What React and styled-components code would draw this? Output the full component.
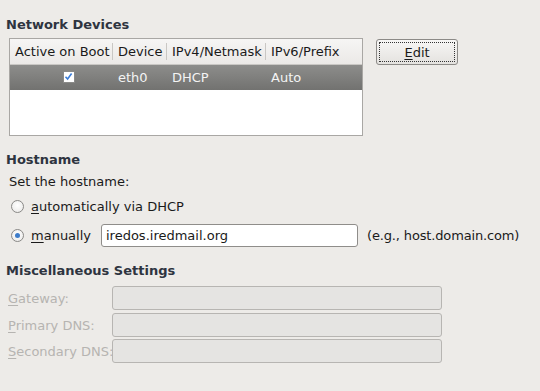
import React from "react";
import styled, { createGlobalStyle } from "styled-components";

const Global = createGlobalStyle`
  html, body { margin: 0; padding: 0; background: #edebe8; }
  body { font-family: "DejaVu Sans", sans-serif; font-size: 13px; color: #1a1a1a; }
`;

const Page = styled.div`
  width: 540px;
  height: 391px;
  box-sizing: border-box;
  padding: 17px 0 0 6px;
  background: #edebe8;
`;

const Heading = styled.div`
  font-weight: bold;
  font-size: 13px;
  color: #2e3440;
  line-height: 16px;
  margin-bottom: ${(p) => p.$mb || 0}px;
  margin-top: ${(p) => p.$mt || 0}px;
`;

const DevicesRow = styled.div`
  display: flex;
  align-items: flex-start;
  padding-left: 3px;
`;

const Table = styled.div`
  width: 352px;
  height: 96px;
  border: 1px solid #a9a7a4;
  background: #ffffff;
  box-sizing: content-box;
`;

const HeaderRow = styled.div`
  display: flex;
  height: 26px;
  background: linear-gradient(#f6f5f4, #ebe9e7);
  border-bottom: 1px solid #c9c7c4;
  box-sizing: border-box;
`;

const HeaderCell = styled.div`
  width: ${(p) => p.$w}px;
  box-sizing: border-box;
  padding-left: 5px;
  display: flex;
  align-items: center;
  position: relative;
  color: #1a1a1a;
  &:not(:last-child)::after {
    content: "";
    position: absolute;
    right: 0;
    top: 4px;
    bottom: 4px;
    width: 1px;
    background: #c9c7c4;
  }
`;

const DataRow = styled.div`
  display: flex;
  height: 25px;
  background: linear-gradient(#8d8d8b, #727270);
  color: #f4f4f4;
`;

const DataCell = styled.div`
  width: ${(p) => p.$w}px;
  box-sizing: border-box;
  padding-left: 5px;
  display: flex;
  align-items: center;
  justify-content: ${(p) => (p.$center ? "center" : "flex-start")};
`;

const Check = styled.div`
  width: 10px;
  height: 10px;
  background: #fff;
  border: 1px solid #8a8a88;
  display: flex;
  align-items: center;
  justify-content: center;
  margin-left: 9px;
  margin-top: -2px;
`;

const EditButton = styled.button`
  margin-left: 13px;
  margin-top: 1px;
  width: 82px;
  height: 26px;
  border: 1px solid #8c8a87;
  border-radius: 3px;
  background: linear-gradient(#f7f6f5, #e4e2df);
  font-family: "DejaVu Sans", sans-serif;
  font-size: 13px;
  color: #1a1a1a;
  padding: 2px;
  box-sizing: border-box;
  display: flex;
  cursor: pointer;
`;

const FocusRing = styled.span`
  flex: 1;
  border: 1px dotted #333;
  display: flex;
  align-items: center;
  justify-content: center;
`;

const U = styled.span`
  text-decoration: underline;
  text-underline-offset: 2px;
`;

const Label = styled.div`
  padding-left: 3px;
  line-height: 16px;
  margin-top: ${(p) => p.$mt || 0}px;
`;

const RadioRow = styled.div`
  display: flex;
  align-items: center;
  padding-left: 5px;
  height: ${(p) => p.$h}px;
  margin-top: ${(p) => p.$mt || 0}px;
`;

const Radio = styled.div`
  width: 11px;
  height: 11px;
  border-radius: 50%;
  border: 1px solid #8a8987;
  background: radial-gradient(circle at 50% 40%, #ffffff, #e8e7e5);
  display: flex;
  align-items: center;
  justify-content: center;
  margin-right: 7px;
  &::after {
    content: "";
    display: ${(p) => (p.$on ? "block" : "none")};
    width: 5px;
    height: 5px;
    border-radius: 50%;
    background: #3d7cc9;
  }
`;

const TextInput = styled.div`
  width: 257px;
  height: 23px;
  box-sizing: border-box;
  border: 1px solid #8f8d8a;
  border-radius: 3px;
  background: #fff;
  margin-left: 10px;
  display: flex;
  align-items: center;
  padding-left: 4px;
  color: #1a1a1a;
`;

const Hint = styled.span`
  margin-left: 9px;
  letter-spacing: -0.15px;
`;

const FieldRow = styled.div`
  display: flex;
  align-items: center;
  height: 24px;
  margin-top: ${(p) => p.$mt || 0}px;
  padding-left: 2px;
`;

const FieldLabel = styled.div`
  width: 104px;
  color: #b6b4b1;
  white-space: nowrap;
`;

const DisabledInput = styled.div`
  width: 330px;
  height: 24px;
  box-sizing: border-box;
  border: 1px solid #b7b5b2;
  border-radius: 3px;
  background: #e5e4e2;
`;

const cols = [103, 54, 99, 96];

export default function App() {
  return (
    <>
      <Global />
      <Page>
        <Heading $mb={5}>Network Devices</Heading>
        <DevicesRow>
          <Table>
            <HeaderRow>
              <HeaderCell $w={cols[0]}>Active on Boot</HeaderCell>
              <HeaderCell $w={cols[1]}>Device</HeaderCell>
              <HeaderCell $w={cols[2]}>IPv4/Netmask</HeaderCell>
              <HeaderCell $w={cols[3]}>IPv6/Prefix</HeaderCell>
            </HeaderRow>
            <DataRow>
              <DataCell $w={cols[0]} $center>
                <Check>
                  <svg width="9" height="9" viewBox="0 0 9 9">
                    <path d="M1.5 4.8 L3.6 7 L7.6 1.6" fill="none" stroke="#3b7dd8" strokeWidth="1.6" />
                  </svg>
                </Check>
              </DataCell>
              <DataCell $w={cols[1]}>eth0</DataCell>
              <DataCell $w={cols[2]}>DHCP</DataCell>
              <DataCell $w={cols[3]}>Auto</DataCell>
            </DataRow>
          </Table>
          <EditButton>
            <FocusRing>
              <span><U>E</U>dit</span>
            </FocusRing>
          </EditButton>
        </DevicesRow>

        <Heading $mt={16}>Hostname</Heading>
        <Label $mt={6}>Set the hostname:</Label>
        <RadioRow $h={20} $mt={6}>
          <Radio />
          <span><U>a</U>utomatically via DHCP</span>
        </RadioRow>
        <RadioRow $h={24} $mt={7}>
          <Radio $on />
          <span><U>m</U>anually</span>
          <TextInput>iredos.iredmail.org</TextInput>
          <Hint>(e.g., host.domain.com)</Hint>
        </RadioRow>

        <Heading $mt={16}>Miscellaneous Settings</Heading>
        <FieldRow $mt={7}>
          <FieldLabel><U>G</U>ateway:</FieldLabel>
          <DisabledInput />
        </FieldRow>
        <FieldRow $mt={3}>
          <FieldLabel><U>P</U>rimary DNS:</FieldLabel>
          <DisabledInput />
        </FieldRow>
        <FieldRow $mt={2}>
          <FieldLabel><U>S</U>econdary DNS:</FieldLabel>
          <DisabledInput />
        </FieldRow>
      </Page>
    </>
  );
}
